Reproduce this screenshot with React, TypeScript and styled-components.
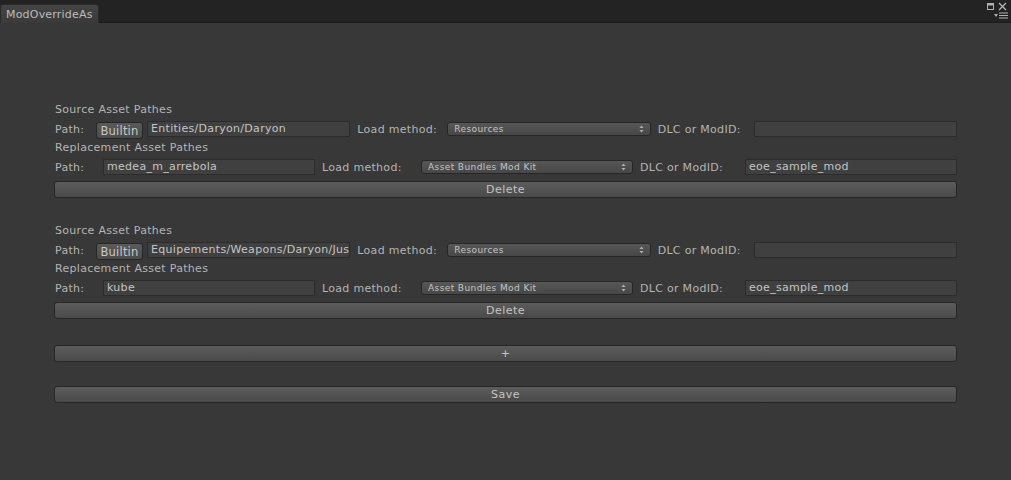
import React from "react";
import styled, { createGlobalStyle } from "styled-components";

const Global = createGlobalStyle`
  html, body { margin: 0; padding: 0; background: #383838; }
  * { box-sizing: border-box; }
  body { font-family: "DejaVu Sans", "Liberation Sans", sans-serif; font-size: 11px; color: #b4b4b4; }
`;

const Window = styled.div`
  width: 1011px;
  height: 480px;
  display: flex;
  flex-direction: column;
  background: #383838;
`;

const TabBar = styled.div`
  height: 23px;
  background: #232323;
  border-bottom: 1px solid #1c1c1c;
  display: flex;
  align-items: flex-end;
  justify-content: space-between;
  padding-right: 3px;
  flex-shrink: 0;
`;

const Tab = styled.div`
  height: 19px;
  margin-bottom: -1px;
  padding: 0 5px;
  display: flex;
  align-items: center;
  background: linear-gradient(#454545, #3a3a3a);
  border: 1px solid #2a2a2a;
  border-bottom: none;
  border-radius: 3px 3px 0 0;
  color: #bcbcbc;
  font-size: 11px;
  letter-spacing: 0.2px;
`;

const WinControls = styled.div`
  display: flex;
  flex-direction: column;
  align-items: flex-end;
  height: 22px;
  padding-top: 2px;
  gap: 1px;
`;

const Content = styled.div`
  padding: 78px 54px 0 55px;
  display: flex;
  flex-direction: column;
`;

const Block = styled.div`
  display: flex;
  flex-direction: column;
  margin-bottom: 24px;
`;

const SectionLabel = styled.div`
  height: 18px;
  line-height: 18px;
  letter-spacing: 0.3px;
  color: #b4b4b4;
`;

const Row = styled.div`
  height: 20px;
  display: flex;
  align-items: center;
`;

const Label = styled.div<{ $w: number }>`
  width: ${(p) => p.$w}px;
  flex-shrink: 0;
  white-space: nowrap;
  letter-spacing: 0.3px;
  color: #b4b4b4;
`;

const Field = styled.div`
  flex: 1 1 0;
  min-width: 0;
  height: 16px;
  line-height: 14px;
  padding: 0 3px;
  background: #404040;
  border: 1px solid #2c2c2c;
  color: #c4c4c4;
  letter-spacing: 0.3px;
  overflow: hidden;
  white-space: nowrap;
`;

const Gap = styled.div<{ $w: number }>`
  width: ${(p) => p.$w}px;
  flex-shrink: 0;
`;

const SmallButton = styled.div`
  width: 47px;
  height: 17px;
  margin-top: 3px;
  margin-right: 4px;
  flex-shrink: 0;
  display: flex;
  align-items: center;
  justify-content: center;
  background: linear-gradient(#5a5a5a, #4b4b4b);
  border: 1px solid #262626;
  border-radius: 3px;
  color: #c8c8c8;
  font-size: 11.5px;
  letter-spacing: 0.2px;
`;

const Dropdown = styled.div`
  flex: 1 1 0;
  min-width: 0;
  height: 14px;
  padding: 0 3px;
  display: flex;
  align-items: center;
  justify-content: space-between;
  background: linear-gradient(#575757, #474747);
  border: 1px solid #262626;
  border-radius: 3px;
  color: #c4c4c4;
  font-size: 9px;
  letter-spacing: 0.4px;
`;

const DropText = styled.span`
  margin-left: 3px;
  white-space: nowrap;
  overflow: hidden;
`;

const ArrowBox = styled.span`
  display: flex;
  margin-right: 3px;
`;

const WideButton = styled.div<{ $mt: number }>`
  margin-top: ${(p) => p.$mt}px;
  margin-left: -1px;
  height: 17px;
  display: flex;
  align-items: center;
  justify-content: center;
  background: linear-gradient(#5c5c5c, #4a4a4a);
  border: 1px solid #262626;
  border-radius: 3px;
  color: #c4c4c4;
  letter-spacing: 0.5px;
`;

const Arrows = () => (
  <ArrowBox>
    <svg width="5" height="8" viewBox="0 0 5 8">
      <path d="M0.5 3 L2.5 0.5 L4.5 3 Z" fill="#b0b0b0" />
      <path d="M0.5 5 L2.5 7.5 L4.5 5 Z" fill="#b0b0b0" />
    </svg>
  </ArrowBox>
);

const Controls = () => (
  <WinControls>
    <svg width="22" height="9" viewBox="0 0 22 9">
      <rect x="1.5" y="1.5" width="6" height="6" fill="none" stroke="#b0b0b0" strokeWidth="1" />
      <rect x="1.5" y="1.5" width="6" height="2" fill="#b0b0b0" />
      <path d="M13 1 L20 8 M20 1 L13 8" stroke="#b8b8b8" strokeWidth="1.2" />
    </svg>
    <svg width="14" height="7" viewBox="0 0 14 7">
      <path d="M0 2 L4 2 L2 5 Z" fill="#b0b0b0" />
      <path d="M5 1 H14 M5 3.5 H14 M5 6 H14" stroke="#b0b0b0" strokeWidth="1.2" />
    </svg>
  </WinControls>
);

type Item = { src: string; rep: string };

const items: Item[] = [
  { src: "Entities/Daryon/Daryon", rep: "medea_m_arrebola" },
  { src: "Equipements/Weapons/Daryon/Jus", rep: "kube" },
];

const Entry = ({ item }: { item: Item }) => (
  <Block>
    <SectionLabel>Source Asset Pathes</SectionLabel>
    <Row>
      <Label $w={41}>Path:</Label>
      <SmallButton>Builtin</SmallButton>
      <Field>{item.src}</Field>
      <Gap $w={7} />
      <Label $w={90}>Load method:</Label>
      <Dropdown>
        <DropText>Resources</DropText>
        <Arrows />
      </Dropdown>
      <Gap $w={7} />
      <Label $w={96}>DLC or ModID:</Label>
      <Field />
    </Row>
    <SectionLabel>Replacement Asset Pathes</SectionLabel>
    <Row>
      <Label $w={48}>Path:</Label>
      <Field>{item.rep}</Field>
      <Gap $w={7} />
      <Label $w={99}>Load method:</Label>
      <Dropdown>
        <DropText>Asset Bundles Mod Kit</DropText>
        <Arrows />
      </Dropdown>
      <Gap $w={7} />
      <Label $w={105}>DLC or ModID:</Label>
      <Field>eoe_sample_mod</Field>
    </Row>
    <WideButton $mt={4}>Delete</WideButton>
  </Block>
);

export default function App() {
  return (
    <>
      <Global />
      <Window>
        <TabBar>
          <Tab>ModOverrideAs</Tab>
          <Controls />
        </TabBar>
        <Content>
          {items.map((it, i) => (
            <Entry key={i} item={it} />
          ))}
          <WideButton $mt={2}>+</WideButton>
          <WideButton $mt={24}>Save</WideButton>
        </Content>
      </Window>
    </>
  );
}
